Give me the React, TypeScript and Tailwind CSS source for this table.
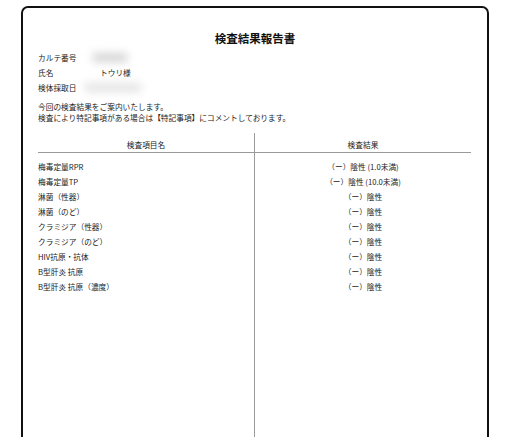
const items = [
  { name: "梅毒定量RPR", result: "（ー）陰性 (1.0未満)" },
  { name: "梅毒定量TP", result: "（ー）陰性 (10.0未満)" },
  { name: "淋菌（性器）", result: "（ー）陰性" },
  { name: "淋菌（のど）", result: "（ー）陰性" },
  { name: "クラミジア（性器）", result: "（ー）陰性" },
  { name: "クラミジア（のど）", result: "（ー）陰性" },
  { name: "HIV抗原・抗体", result: "（ー）陰性" },
  { name: "B型肝炎 抗原", result: "（ー）陰性" },
  { name: "B型肝炎 抗原（濃度）", result: "（ー）陰性" },
];

function Blur({ w, tone }: { w: string; tone: string }) {
  return <span className={`inline-block h-[9px] rounded-full blur-[4px] ${w} ${tone}`} />;
}

export default function App() {
  return (
    <div
      className="h-[437px] overflow-hidden bg-white px-[21px] pt-[6px] text-[#222]"
      style={{ fontFamily: '"Noto Sans CJK JP", "Noto Sans", sans-serif' }}
    >
      <div className="flex h-[470px] flex-col rounded-t-[7px] border-2 border-[#111] px-[15px] pt-[23px]">
        <h1 className="text-center text-[11.5px] font-bold leading-[14px] text-[#111]">検査結果報告書</h1>

        <div className="mt-[4.5px] text-[7.7px] leading-[15px]">
          <div className="flex items-center">
            <span className="w-[54px]">カルテ番号</span>
            <Blur w="w-[36px]" tone="bg-[#d4d4d4]" />
          </div>
          <div className="flex items-center">
            <span className="w-[62px]">氏名</span>
            <span>トウリ様</span>
          </div>
          <div className="flex items-center">
            <span className="w-[46px]">検体採取日</span>
            <Blur w="w-[58px]" tone="bg-[#e4e4e4]" />
          </div>
        </div>

        <div className="mt-[6px] text-[7.7px] leading-[11px]">
          <p>今回の検査結果をご案内いたします。</p>
          <p>検査により特記事項がある場合は【特記事項】にコメントしております。</p>
        </div>

        <div className="mt-[10.5px] flex flex-1 text-[7.7px]">
          <div className="w-[216px]">
            <div className="border-b border-[#9a9a9a] pb-[2px] pt-[6px] text-center leading-[11px]">検査項目名</div>
            <div className="pt-[5.5px]">
              {items.map((it) => (
                <div key={it.name} className="leading-[15.1px]">
                  {it.name}
                </div>
              ))}
            </div>
          </div>
          <div className="mr-[1px] flex-1 border-l border-[#9a9a9a]">
            <div className="border-b border-[#9a9a9a] pb-[2px] pt-[6px] text-center leading-[11px]">検査結果</div>
            <div className="pt-[5.5px]">
              {items.map((it) => (
                <div key={it.name} className="text-center leading-[15.1px]">
                  {it.result}
                </div>
              ))}
            </div>
          </div>
        </div>
      </div>
    </div>
  );
}
